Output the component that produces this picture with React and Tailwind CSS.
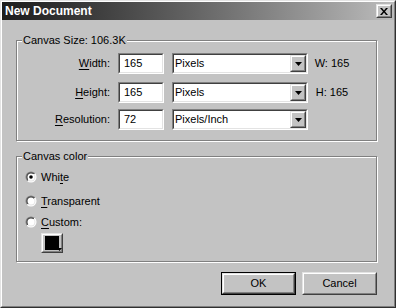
import React from 'react';

const Raised = ({ className = '', children }) => (
  <div className={`border border-t-[#e3e3e3] border-l-[#e3e3e3] border-r-[#404040] border-b-[#404040] ${className}`}>
    <div className="h-full w-full border border-t-white border-l-white border-r-[#808080] border-b-[#808080] flex items-center justify-center">
      {children}
    </div>
  </div>
);

const Sunken = ({ className = '', children }) => (
  <div className={`border border-t-[#808080] border-l-[#808080] border-r-white border-b-white ${className}`}>
    <div className="h-full w-full border border-t-[#404040] border-l-[#404040] border-r-[#e3e3e3] border-b-[#e3e3e3] bg-white flex items-center">
      {children}
    </div>
  </div>
);

const Arrow = () => (
  <svg width="7" height="4" viewBox="0 0 7 4">
    <path d="M0 0h7L3.5 4z" fill="#000" />
  </svg>
);

const Select = ({ value }) => (
  <Sunken className="w-[136px] h-[21px]">
    <span className="flex-1 pl-[1px] leading-none">{value}</span>
    <Raised className="w-[16px] h-full bg-[#c3c3c3]">
      <Arrow />
    </Raised>
  </Sunken>
);

const Radio = ({ checked }) => (
  <svg width="12" height="12" viewBox="0 0 12 12" className="shrink-0">
    <defs>
      <linearGradient id="rOuter" x1="0" y1="0" x2="1" y2="1">
        <stop offset="0.5" stopColor="#808080" />
        <stop offset="0.5" stopColor="#ffffff" />
      </linearGradient>
      <linearGradient id="rInner" x1="0" y1="0" x2="1" y2="1">
        <stop offset="0.5" stopColor="#404040" />
        <stop offset="0.5" stopColor="#e3e3e3" />
      </linearGradient>
    </defs>
    <circle cx="6" cy="6" r="5.5" fill="url(#rOuter)" />
    <circle cx="6" cy="6" r="4.5" fill="url(#rInner)" />
    <circle cx="6" cy="6" r="3.5" fill="#fff" />
    {checked && <circle cx="6" cy="6" r="1.8" fill="#000" />}
  </svg>
);

const Group = ({ label, className = '', children }) => (
  <div className={`relative w-[361px] border border-[#808080] shadow-[inset_1px_1px_0_#fff,1px_1px_0_#fff] ${className}`}>
    <span className="absolute -top-[8px] left-[5px] bg-[#c3c3c3] px-[1px] leading-[14px]">{label}</span>
    {children}
  </div>
);

const Field = ({ label, u, value, unit, note }) => (
  <div className="flex items-center h-[21px]">
    <span className="w-[93px] text-right">
      <span className="underline underline-offset-2">{u}</span>{label}
    </span>
    <Sunken className="ml-[8px] w-[46px] h-[21px]">
      <span className="pl-[4px]">{value}</span>
    </Sunken>
    <div className="ml-[8px]">
      <Select value={unit} />
    </div>
    <span className="ml-[3px] w-[42px] text-center">{note}</span>
  </div>
);

const Option = ({ checked, pre, u, post, className = '' }) => (
  <div className={`flex items-center h-[16px] ${className}`}>
    <Radio checked={checked} />
    <span className="ml-[4px]">
      {pre}<span className="underline underline-offset-2">{u}</span>{post}
    </span>
  </div>
);

export default function App() {
  return (
    <div className="w-[396px] h-[308px] bg-[#c3c3c3] border border-t-[#e3e3e3] border-l-[#e3e3e3] border-r-[#303030] border-b-[#303030] font-['Liberation_Sans',Arial,sans-serif] text-[11px] text-black">
      <div className="h-full border border-t-white border-l-white border-r-[#808080] border-b-[#808080] flex flex-col">
        {/* Title bar */}
        <div className="h-[18px] flex items-center justify-between bg-gradient-to-r from-[#1c1c1c] to-[#bcbcbc]">
          <span className="pl-[3px] text-white font-bold text-[12px] leading-none">New Document</span>
          <Raised className="mr-[2px] w-[16px] h-[14px] bg-[#c3c3c3]">
            <svg width="8" height="7" viewBox="0 0 8 7">
              <path d="M0 0h2l2 2.5L6 0h2L5 3.5 8 7H6L4 4.5 2 7H0l3-3.5z" fill="#000" />
            </svg>
          </Raised>
        </div>

        <div className="pl-[14px] pt-[20px] flex flex-col">
          <Group label="Canvas Size: 106.3K" className="h-[101px] pt-[12px]">
            <Field u="W" label="idth:" value="165" unit="Pixels" note="W: 165" />
            <div className="mt-[8px]">
              <Field u="H" label="eight:" value="165" unit="Pixels" note="H: 165" />
            </div>
            <div className="mt-[6px]">
              <Field u="R" label="esolution:" value="72" unit="Pixels/Inch" note="" />
            </div>
          </Group>

          <Group label="Canvas color" className="mt-[15px] h-[106px] pt-[12px] pl-[8px]">
            <Option checked pre="Whi" u="t" post="e" />
            <Option className="mt-[8px]" pre="" u="T" post="ransparent" />
            <Option className="mt-[5px]" pre="" u="C" post="ustom:" />
            <div className="relative ml-[16px] mt-[3px] w-[22px] h-[20px]">
              <Raised className="w-[22px] h-[20px] bg-[#c3c3c3]">
                <div className="w-[14px] h-[14px] bg-black" />
              </Raised>
              <svg width="5" height="3" viewBox="0 0 5 3" className="absolute right-[1px] bottom-[2px]">
                <path d="M0 0h5L2.5 3z" fill="#000" />
              </svg>
            </div>
          </Group>

          <div className="w-[361px] mt-[10px] flex justify-end gap-[6px]">
            <div className="border border-black">
              <Raised className="w-[73px] h-[21px] bg-[#c3c3c3]">OK</Raised>
            </div>
            <Raised className="w-[75px] h-[23px] bg-[#c3c3c3]">Cancel</Raised>
          </div>
        </div>
      </div>
    </div>
  );
}
